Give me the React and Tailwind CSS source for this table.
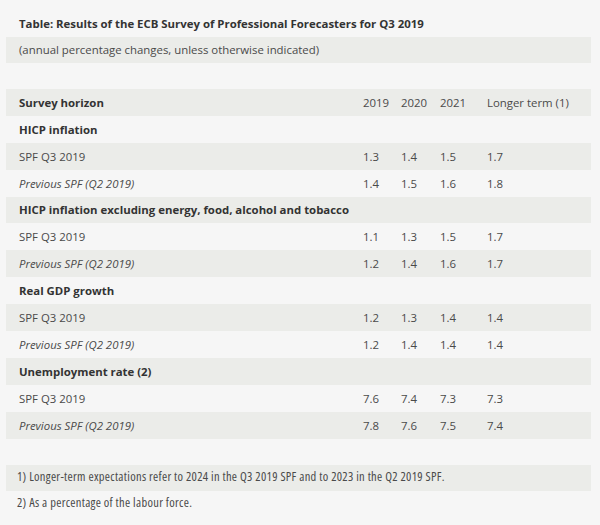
const groups = [
  {
    name: 'HICP inflation',
    q3: ['1.3', '1.4', '1.5', '1.7'],
    q2: ['1.4', '1.5', '1.6', '1.8'],
  },
  {
    name: 'HICP inflation excluding energy, food, alcohol and tobacco',
    q3: ['1.1', '1.3', '1.5', '1.7'],
    q2: ['1.2', '1.4', '1.6', '1.7'],
  },
  {
    name: 'Real GDP growth',
    q3: ['1.2', '1.3', '1.4', '1.4'],
    q2: ['1.2', '1.4', '1.4', '1.4'],
  },
  {
    name: 'Unemployment rate (2)',
    q3: ['7.6', '7.4', '7.3', '7.3'],
    q2: ['7.8', '7.6', '7.5', '7.4'],
  },
];

function Row({ striped, children, tall }) {
  return (
    <div
      className={
        'grid grid-cols-[351px_38px_39px_47px_1fr] items-center ' +
        (tall ? 'h-[26.9px] ' : 'h-[26px] ') +
        (striped ? 'bg-[#ebece9]' : '')
      }
    >
      {children}
    </div>
  );
}

function DataRow({ label, values, striped, italic }) {
  return (
    <Row striped={striped} tall>
      <div className={'pl-[13px] ' + (italic ? 'italic' : '')}>{label}</div>
      {values.map((v, i) => (
        <div key={i} className="pl-[6px]">{v}</div>
      ))}
    </Row>
  );
}

export default function App() {
  let idx = 3;
  const rows = [];
  groups.forEach((g) => {
    idx++;
    rows.push(
      <Row key={g.name} striped={idx % 2 === 1} tall>
        <div className="col-span-5 pl-[13px] font-bold text-[#333]">{g.name}</div>
      </Row>
    );
    idx++;
    rows.push(<DataRow key={g.name + 'a'} label="SPF Q3 2019" values={g.q3} striped={idx % 2 === 1} />);
    idx++;
    rows.push(
      <DataRow key={g.name + 'b'} label="Previous SPF (Q2 2019)" values={g.q2} striped={idx % 2 === 1} italic />
    );
  });

  return (
    <div className="w-[600px] h-[525px] bg-[#f6f6f6] pt-[11px] font-['Open_Sans',sans-serif] text-[11.4px] text-[#4a4a4a]">
      <div className="ml-[6px] w-[585px]">
        <Row>
          <div className="col-span-5 pl-[13px] font-bold text-[#333]">
            Table: Results of the ECB Survey of Professional Forecasters for Q3 2019
          </div>
        </Row>
        <Row striped>
          <div className="col-span-5 pl-[13px]">(annual percentage changes, unless otherwise indicated)</div>
        </Row>
        <Row />
        <Row striped tall>
          <div className="pl-[13px] font-bold text-[#333]">Survey horizon</div>
          <div className="pl-[6px]">2019</div>
          <div className="pl-[6px]">2020</div>
          <div className="pl-[6px]">2021</div>
          <div className="pl-[6px]">Longer term (1)</div>
        </Row>
        {rows}
        <Row />
        <Row striped>
          <div className="col-span-5 pl-[11px] [font-stretch:condensed] text-[12.5px] tracking-[0.3px]">
            1) Longer-term expectations refer to 2024 in the Q3 2019 SPF and to 2023 in the Q2 2019 SPF.
          </div>
        </Row>
        <Row>
          <div className="col-span-5 pl-[11px] [font-stretch:condensed] text-[12.5px] tracking-[0.3px]">
            2) As a percentage of the labour force.
          </div>
        </Row>
      </div>
    </div>
  );
}
